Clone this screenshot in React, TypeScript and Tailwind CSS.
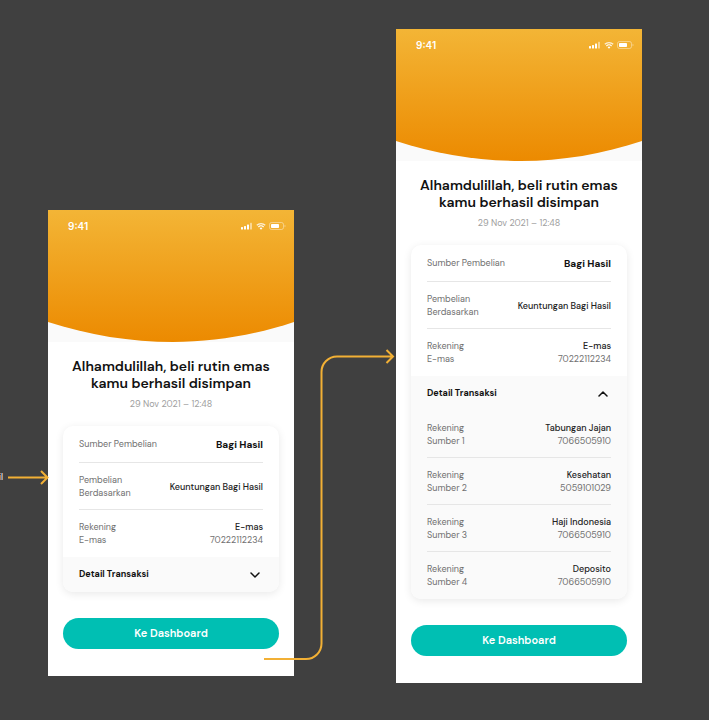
import { useState } from "react";

type Account = { name: string; label: string; number: string };

const accounts: Account[] = [
  { label: "Sumber 1", name: "Tabungan Jajan", number: "7066505910" },
  { label: "Sumber 2", name: "Kesehatan", number: "5059101029" },
  { label: "Sumber 3", name: "Haji Indonesia", number: "7066505910" },
  { label: "Sumber 4", name: "Deposito", number: "7066505910" },
];

function StatusBar() {
  return (
    <div className="relative flex items-center justify-between pt-2 pr-2 pl-5 text-white">
      <span className="font-[Inter,sans-serif] text-[10px] leading-4 font-semibold">9:41</span>
      <svg width="46" height="10" viewBox="0 0 46 10" fill="none" aria-hidden="true">
        <g fill="#fff">
          <rect x="1" y="6" width="2" height="2.6" rx="0.5" />
          <rect x="4" y="5" width="2" height="3.6" rx="0.5" />
          <rect x="7" y="3.4" width="2" height="5.2" rx="0.5" />
          <rect x="10" y="1.8" width="2" height="6.8" rx="0.5" fillOpacity="0.5" />
        </g>
        <path d="M16.8 4.3a6 6 0 0 1 8.4 0" stroke="#fff" strokeOpacity="0.8" strokeWidth="1.3" />
        <path d="M18.4 6a3.7 3.7 0 0 1 5.2 0" stroke="#fff" strokeWidth="1.2" />
        <path d="M19.6 7.2a2 2 0 0 1 2.8 0L21 8.8z" fill="#fff" />
        <rect x="29.5" y="1.5" width="14" height="7" rx="2" stroke="#fff" strokeOpacity="0.4" />
        <rect x="31" y="3" width="8" height="4" rx="0.8" fill="#fff" />
        <path d="M44.6 3.8v2.4c.6-.2.9-.7.9-1.2s-.3-1-.9-1.200z" fill="#fff" fillOpacity="0.5" />
      </svg>
    </div>
  );
}

function Header({ id }: { id: string }) {
  return (
    <div className="relative h-[132px] bg-[#fafafa]">
      <svg
        className="absolute inset-0 h-full w-full"
        viewBox="0 0 246 132"
        preserveAspectRatio="none"
        aria-hidden="true"
      >
        <defs>
          <linearGradient id={id} x1="0" y1="0" x2="0" y2="1">
            <stop offset="0" stopColor="#f3b536" />
            <stop offset="1" stopColor="#ec8a00" />
          </linearGradient>
        </defs>
        <path d="M0 0H246V112C207 125 166 132 125 132C83 132 40 125 0 112Z" fill={`url(#${id})`} />
      </svg>
      <StatusBar />
    </div>
  );
}

function AccountRow({ label, name, number }: Account) {
  return (
    <div className="flex justify-between border-b border-[#e6e6e6] pt-[11px] pb-[9px] last:border-transparent">
      <dt>
        Rekening
        <br />
        {label}
      </dt>
      <dd className="text-right">
        <span className="font-medium text-[#222222]">{name}</span>
        <br />
        {number}
      </dd>
    </div>
  );
}

function Phone({ id, defaultOpen = false }: { id: string; defaultOpen?: boolean }) {
  const [open, setOpen] = useState(defaultOpen);
  return (
    <main className="min-w-[246px] flex-1 bg-white pb-[27px]">
      <Header id={id} />
      <div className="px-4 pt-4 text-center">
        <h1 className="text-[14px] leading-[17px] font-semibold text-[#111111]">
          Alhamdulillah, beli rutin emas
          <br />
          kamu berhasil disimpan
        </h1>
        <p className="mt-[6px] text-[9px] leading-[13px] text-[#a0a0a0]">29 Nov 2021 – 12:48</p>
      </div>
      <section className="mx-[15px] mt-[15px] overflow-hidden rounded-[10px] bg-white text-[9px] leading-[13px] text-[#707070] shadow-[0_2px_8px_rgba(0,0,0,0.09)]">
        <dl className="px-4">
          <div className="flex h-[37px] items-center justify-between border-b border-[#e6e6e6]">
            <dt>Sumber Pembelian</dt>
            <dd className="text-[10px] font-bold text-[#111111]">Bagi Hasil</dd>
          </div>
          <div className="flex items-center justify-between border-b border-[#e6e6e6] pt-[11px] pb-[9px]">
            <dt>
              Pembelian
              <br />
              Berdasarkan
            </dt>
            <dd className="font-medium text-[#222222]">Keuntungan Bagi Hasil</dd>
          </div>
          <AccountRow label="E-mas" name="E-mas" number="70222112234" />
        </dl>
        <div className="bg-[#fafafa]">
          <button
            type="button"
            aria-expanded={open}
            onClick={() => setOpen(!open)}
            className="flex h-[35px] w-full items-center justify-between px-4 font-bold text-[#111111]"
          >
            Detail Transaksi
            <svg
              className={open ? "mr-[3px] rotate-180" : "mr-[3px]"}
              width="10"
              height="6"
              viewBox="0 0 10 6"
              fill="none"
              stroke="currentColor"
              strokeWidth="1.5"
              strokeLinecap="round"
              strokeLinejoin="round"
              aria-hidden="true"
            >
              <path d="M1 1l4 4 4-4" />
            </svg>
          </button>
          {open && (
            <dl className="px-4">
              {accounts.map((account) => (
                <AccountRow key={account.label} {...account} />
              ))}
            </dl>
          )}
        </div>
      </section>
      <div className="px-[15px] pt-[26px]">
        <button
          type="button"
          className="h-[31px] w-full rounded-full bg-[#00bfb3] text-[11px] font-semibold text-white"
        >
          Ke Dashboard
        </button>
      </div>
    </main>
  );
}

export default function App() {
  return (
    <div className="flex min-h-screen items-start overflow-hidden bg-[#404040] font-['DM_Sans',Inter,'Liberation_Sans',sans-serif]">
      <div className="relative z-10 w-12 shrink-0 pt-[471px] text-[9px] leading-[13px] text-white">
        <div className="flex w-[3px] justify-end">
          <span>il</span>
        </div>
        <svg
          className="absolute top-[470px] left-2"
          width="41"
          height="15"
          viewBox="0 0 41 15"
          fill="none"
          stroke="#f2b035"
          strokeWidth="2"
          aria-hidden="true"
        >
          <path d="M0 7.5H39.5M33 1l6.5 6.5L33 14" />
        </svg>
      </div>
      <div className="flex flex-1 pt-[210px]">
        <Phone id="sun-closed" />
      </div>
      <div className="relative z-10 w-[102px] shrink-0">
        <svg
          className="absolute top-[348px] -left-[30px]"
          width="132"
          height="314"
          viewBox="0 0 132 314"
          fill="none"
          stroke="#f2b035"
          strokeWidth="2"
          aria-hidden="true"
        >
          <path d="M0 311H42A15.5 15.5 0 0 0 57.5 295.5V24A15.5 15.5 0 0 1 73 8.5H129M122.5 2l6.5 6.5-6.5 6.5" />
        </svg>
      </div>
      <div className="flex flex-1 pt-[29px]">
        <Phone id="sun-open" defaultOpen />
      </div>
      <div className="w-[67px] shrink-0" />
    </div>
  );
}
